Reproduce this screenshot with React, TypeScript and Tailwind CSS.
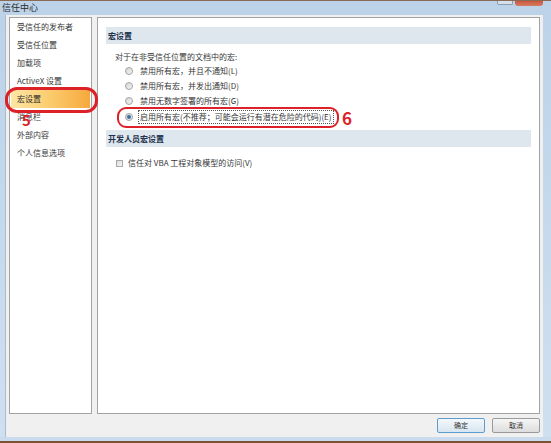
import React from "react";

const font = { fontFamily: '"Noto Sans CJK SC", "Noto Sans", sans-serif' };

const navItems = [
  "受信任的发布者",
  "受信任位置",
  "加载项",
  "ActiveX 设置",
  "宏设置",
  "消息栏",
  "外部内容",
  "个人信息选项",
];

const options = [
  "禁用所有宏，并且不通知(L)",
  "禁用所有宏，并发出通知(D)",
  "禁用无数字签署的所有宏(G)",
];

function Radio({ checked }: { checked?: boolean }) {
  return (
    <span className="flex h-[8px] w-[8px] shrink-0 items-center justify-center rounded-full border border-[#a4a4a4] bg-gradient-to-br from-[#d6d6d6] to-[#f4f4f4]">
      {checked && <span className="h-[4px] w-[4px] rounded-full bg-[#3d6f9e]" />}
    </span>
  );
}

function SectionBar({ children }: { children: React.ReactNode }) {
  return (
    <div className="mx-[8px] flex h-[17px] items-center bg-[#dee7ee] pl-[2px] text-[8px] font-bold text-[#22324d]">
      {children}
    </div>
  );
}

export default function App() {
  return (
    <div
      className="relative flex h-[443px] w-[551px] flex-col overflow-hidden bg-gradient-to-b from-[#bcd2e8] to-[#cfe0f0] text-[#363636]"
      style={font}
    >
      {/* title bar */}
      <div className="relative h-[15px] shrink-0 border-t border-[#8a6a52]">
        <div className="pl-[2px] pt-[1px] text-[9px] leading-[11px] text-[#2c2c2c]">信任中心</div>
        <div className="absolute right-[8px] top-0 flex gap-[2px]">
          <span className="h-[4px] w-[16px] rounded-b-[2px] border border-t-0 border-[#8b9cb0] bg-[#d6e1ec]" />
          <span className="h-[5px] w-[28px] rounded-b-[3px] bg-gradient-to-b from-[#c8583e] to-[#d77a62]" />
        </div>
      </div>

      {/* dialog body */}
      <div className="flex min-h-0 flex-1 pl-[5px] pr-[8px]">
        <div className="flex flex-1 flex-col border-l border-[#a6bcd3] bg-[#f0f0f0] px-[3px] pt-[2px]">
          <div className="flex h-[397px] gap-[5px]">
            {/* left nav */}
            <div className="flex w-[83px] shrink-0 flex-col border border-[#a3a3a3] bg-white">
              {navItems.map((item, i) => (
                <div
                  key={item}
                  className={
                    i === 4
                      ? "mx-[1px] flex h-[18px] items-center bg-gradient-to-r from-[#fde6a4] via-[#fbcb6c] to-[#f6a93c] pl-[6px] text-[8px] text-[#2a2a2a]"
                      : "mx-[1px] flex h-[18px] items-center pl-[6px] text-[8px]"
                  }
                >
                  {item}
                </div>
              ))}
            </div>

            {/* right content */}
            <div className="flex flex-1 flex-col border border-[#a3a3a3] bg-white pt-[9px]">
              <SectionBar>宏设置</SectionBar>
              <div className="ml-[17px] mt-[6px] flex h-[13px] items-center text-[8px]">
                对于在非受信任位置的文档中的宏:
              </div>
              {options.map((o) => (
                <div key={o} className="ml-[27px] flex h-[15px] items-center gap-[7px] text-[8px]">
                  <Radio />
                  <span>{o}</span>
                </div>
              ))}
              <div className="ml-[27px] flex h-[18px] items-center gap-[5px] text-[8px]">
                <Radio checked />
                <span className="border border-dotted border-[#555] px-[1px] leading-[12px]">
                  启用所有宏(不推荐；可能会运行有潜在危险的代码)(E)
                </span>
              </div>
              <div className="mt-[4px]">
                <SectionBar>开发人员宏设置</SectionBar>
              </div>
              <div className="ml-[18px] mt-[9px] flex h-[14px] items-center gap-[5px] text-[8px]">
                <span className="h-[7px] w-[7px] shrink-0 border border-[#a8a8a8] bg-gradient-to-br from-[#dcdcdc] to-[#f6f6f6]" />
                <span>信任对 VBA 工程对象模型的访问(V)</span>
              </div>
            </div>
          </div>

          {/* buttons */}
          <div className="flex justify-end gap-[7px] pt-[4px]">
            <button className="flex h-[15px] w-[48px] items-center justify-center rounded-[2px] border border-[#5e9ccb] bg-gradient-to-b from-[#f4f8fb] to-[#d7e6f1] text-[7px] text-[#333]">
              确定
            </button>
            <button className="flex h-[15px] w-[48px] items-center justify-center rounded-[2px] border border-[#9a9a9a] bg-gradient-to-b from-[#f6f6f6] to-[#dddddd] text-[7px] text-[#333]">
              取消
            </button>
          </div>
        </div>
      </div>

      {/* bottom frame */}
      <div className="h-[6px] shrink-0 border-b-[2px] border-[#7a5236] bg-[#c9dbec]" />

      {/* red annotations */}
      <div className="absolute left-[5px] top-[87px] h-[26px] w-[93px] rounded-[12px] border-[3px] border-[#dc2228]" />
      <div className="absolute left-[22px] top-[112px] text-[15px] font-bold leading-none text-[#dc2228]">5</div>
      <div className="absolute left-[117px] top-[107px] h-[21px] w-[222px] rounded-[9px] border-[2px] border-[#dc2228]" />
      <div className="absolute left-[342px] top-[109px] text-[17px] font-bold leading-none text-[#dc2228]">6</div>
    </div>
  );
}
